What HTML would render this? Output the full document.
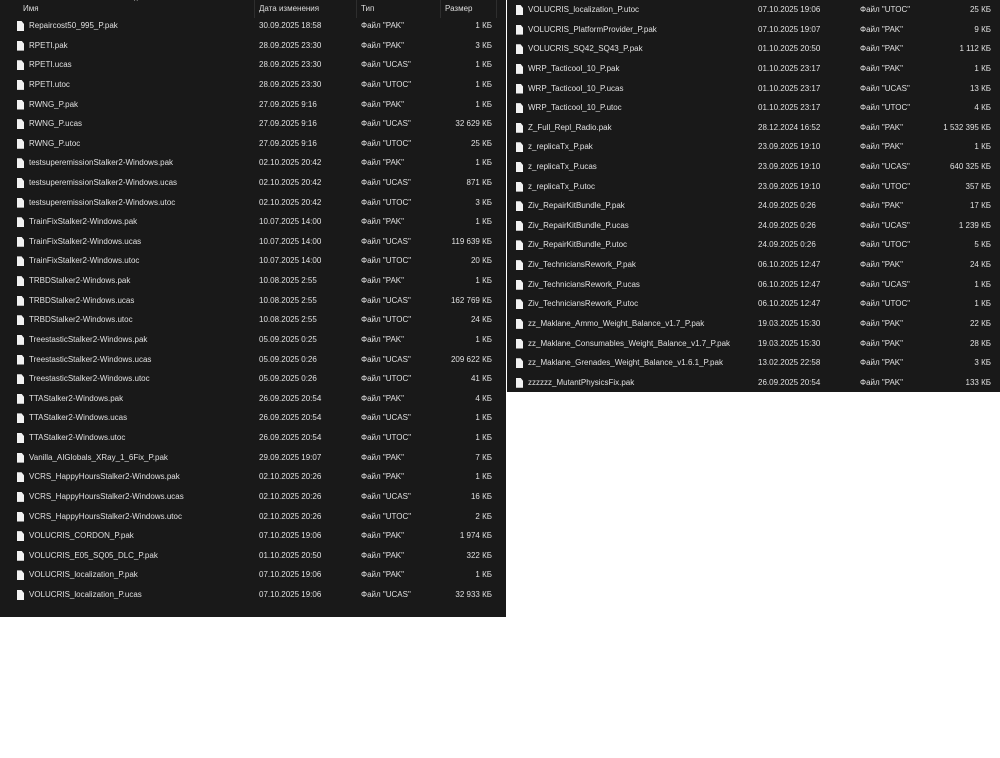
<!DOCTYPE html>
<html><head><meta charset="utf-8"><style>
*{margin:0;padding:0;box-sizing:border-box}
body{width:1000px;height:758px;background:#fff;position:relative;overflow:hidden;font-family:"Liberation Sans",sans-serif;font-size:8px;color:#e0e0e0}
.p{position:absolute;background:#191919}
.r{position:absolute;height:16px;line-height:16px;white-space:nowrap}
.r span{position:absolute}
.ic{position:absolute;width:7px;height:10px;background:#f2f2f2;top:3px;clip-path:polygon(0 0,65% 0,100% 30%,100% 100%,0 100%)}
.sz{text-align:right;width:80px}
.h{position:absolute;top:4px;font-size:8px;color:#ddd}
.sep{position:absolute;top:0;width:1px;height:18px;background:#2e2e2e}
</style></head><body>
<div class="p" style="left:0;top:0;width:506px;height:617px"></div>
<div class="p" style="left:507px;top:0;width:493px;height:392px"></div>
<div class="h" style="left:23px">Имя</div>
<div class="h" style="left:134px;top:-3px;color:#aaa">^</div>
<div class="sep" style="left:254px"></div><div class="h" style="left:259px">Дата изменения</div>
<div class="sep" style="left:356px"></div><div class="h" style="left:361px">Тип</div>
<div class="sep" style="left:440px"></div><div class="h" style="left:445px">Размер</div>
<div class="sep" style="left:496px"></div>
<div id="L"></div><div id="R"></div>
<script>
const L=[["Repaircost50_995_P.pak","30.09.2025 18:58","PAK","1 КБ"],["RPETI.pak","28.09.2025 23:30","PAK","3 КБ"],["RPETI.ucas","28.09.2025 23:30","UCAS","1 КБ"],["RPETI.utoc","28.09.2025 23:30","UTOC","1 КБ"],["RWNG_P.pak","27.09.2025 9:16","PAK","1 КБ"],["RWNG_P.ucas","27.09.2025 9:16","UCAS","32 629 КБ"],["RWNG_P.utoc","27.09.2025 9:16","UTOC","25 КБ"],["testsuperemissionStalker2-Windows.pak","02.10.2025 20:42","PAK","1 КБ"],["testsuperemissionStalker2-Windows.ucas","02.10.2025 20:42","UCAS","871 КБ"],["testsuperemissionStalker2-Windows.utoc","02.10.2025 20:42","UTOC","3 КБ"],["TrainFixStalker2-Windows.pak","10.07.2025 14:00","PAK","1 КБ"],["TrainFixStalker2-Windows.ucas","10.07.2025 14:00","UCAS","119 639 КБ"],["TrainFixStalker2-Windows.utoc","10.07.2025 14:00","UTOC","20 КБ"],["TRBDStalker2-Windows.pak","10.08.2025 2:55","PAK","1 КБ"],["TRBDStalker2-Windows.ucas","10.08.2025 2:55","UCAS","162 769 КБ"],["TRBDStalker2-Windows.utoc","10.08.2025 2:55","UTOC","24 КБ"],["TreestasticStalker2-Windows.pak","05.09.2025 0:25","PAK","1 КБ"],["TreestasticStalker2-Windows.ucas","05.09.2025 0:26","UCAS","209 622 КБ"],["TreestasticStalker2-Windows.utoc","05.09.2025 0:26","UTOC","41 КБ"],["TTAStalker2-Windows.pak","26.09.2025 20:54","PAK","4 КБ"],["TTAStalker2-Windows.ucas","26.09.2025 20:54","UCAS","1 КБ"],["TTAStalker2-Windows.utoc","26.09.2025 20:54","UTOC","1 КБ"],["Vanilla_AIGlobals_XRay_1_6Fix_P.pak","29.09.2025 19:07","PAK","7 КБ"],["VCRS_HappyHoursStalker2-Windows.pak","02.10.2025 20:26","PAK","1 КБ"],["VCRS_HappyHoursStalker2-Windows.ucas","02.10.2025 20:26","UCAS","16 КБ"],["VCRS_HappyHoursStalker2-Windows.utoc","02.10.2025 20:26","UTOC","2 КБ"],["VOLUCRIS_CORDON_P.pak","07.10.2025 19:06","PAK","1 974 КБ"],["VOLUCRIS_E05_SQ05_DLC_P.pak","01.10.2025 20:50","PAK","322 КБ"],["VOLUCRIS_localization_P.pak","07.10.2025 19:06","PAK","1 КБ"],["VOLUCRIS_localization_P.ucas","07.10.2025 19:06","UCAS","32 933 КБ"]];
const R=[["VOLUCRIS_localization_P.utoc","07.10.2025 19:06","UTOC","25 КБ"],["VOLUCRIS_PlatformProvider_P.pak","07.10.2025 19:07","PAK","9 КБ"],["VOLUCRIS_SQ42_SQ43_P.pak","01.10.2025 20:50","PAK","1 112 КБ"],["WRP_Tacticool_10_P.pak","01.10.2025 23:17","PAK","1 КБ"],["WRP_Tacticool_10_P.ucas","01.10.2025 23:17","UCAS","13 КБ"],["WRP_Tacticool_10_P.utoc","01.10.2025 23:17","UTOC","4 КБ"],["Z_Full_Repl_Radio.pak","28.12.2024 16:52","PAK","1 532 395 КБ"],["z_replicaTx_P.pak","23.09.2025 19:10","PAK","1 КБ"],["z_replicaTx_P.ucas","23.09.2025 19:10","UCAS","640 325 КБ"],["z_replicaTx_P.utoc","23.09.2025 19:10","UTOC","357 КБ"],["Ziv_RepairKitBundle_P.pak","24.09.2025 0:26","PAK","17 КБ"],["Ziv_RepairKitBundle_P.ucas","24.09.2025 0:26","UCAS","1 239 КБ"],["Ziv_RepairKitBundle_P.utoc","24.09.2025 0:26","UTOC","5 КБ"],["Ziv_TechniciansRework_P.pak","06.10.2025 12:47","PAK","24 КБ"],["Ziv_TechniciansRework_P.ucas","06.10.2025 12:47","UCAS","1 КБ"],["Ziv_TechniciansRework_P.utoc","06.10.2025 12:47","UTOC","1 КБ"],["zz_Maklane_Ammo_Weight_Balance_v1.7_P.pak","19.03.2025 15:30","PAK","22 КБ"],["zz_Maklane_Consumables_Weight_Balance_v1.7_P.pak","19.03.2025 15:30","PAK","28 КБ"],["zz_Maklane_Grenades_Weight_Balance_v1.6.1_P.pak","13.02.2025 22:58","PAK","3 КБ"],["zzzzzz_MutantPhysicsFix.pak","26.09.2025 20:54","PAK","133 КБ"]];
function draw(data,id,x0,y0){let h="";data.forEach((d,i)=>{const y=y0+i*19.62;h+=`<div class="r" style="left:0;top:${y.toFixed(1)}px"><div class="ic" style="left:${x0+17}px"></div><span style="left:${x0+29}px">${d[0]}</span><span style="left:${x0+259}px">${d[1]}</span><span style="left:${x0+361}px">Файл "${d[2]}"</span><span class="sz" style="left:${x0+412}px">${d[3]}</span></div>`});document.getElementById(id).innerHTML=h;}
draw(L,"L",0,18);draw(R,"R",499,2);
</script>
</body></html>
